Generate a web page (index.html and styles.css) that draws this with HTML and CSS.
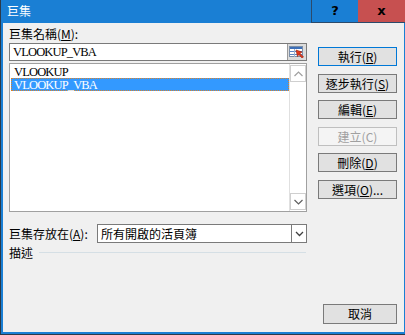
FILE: index.html
```html
<!DOCTYPE html>
<html lang="zh-Hant">
<head>
  <meta charset="UTF-8">
  <title>巨集</title>
  <link rel="stylesheet" href="styles.css">
</head>
<body>
  <div class="window">
    <div class="titlebar">
      <div class="title">巨集</div>
      <div class="caption-btn help">?</div>
      <div class="caption-btn close">x</div>
    </div>

    <div class="client">
      <div class="left">
        <div class="label">巨集名稱(<u>M</u>):</div>
        <div class="name-box">
          <div class="name-text">VLOOKUP_VBA</div>
          <div class="ref-btn">
            <svg width="16" height="12" viewBox="0 0 16 12">
              <rect x="0.5" y="0.5" width="13" height="10" fill="#fff" stroke="#7b8fa8"/>
              <rect x="1" y="1" width="12" height="2" fill="#3d6fb8"/>
              <line x1="1" y1="5.5" x2="13" y2="5.5" stroke="#5b86c6"/>
              <line x1="1" y1="8.5" x2="13" y2="8.5" stroke="#5b86c6"/>
              <line x1="5.5" y1="3" x2="5.5" y2="11" stroke="#9fb3cf"/>
              <path d="M7 4 L13 6 L11 7.5 L14.5 11 L13 12 L9.8 8.6 L8.5 10.5 Z" fill="#e03a1e" stroke="#9a1e0c" stroke-width="0.6"/>
            </svg>
          </div>
        </div>
        <div class="listbox">
          <div class="items">
            <div class="item">VLOOKUP</div>
            <div class="item selected">VLOOKUP_VBA</div>
          </div>
          <div class="scrollbar">
            <div class="arrow">
              <svg width="9" height="6" viewBox="0 0 9 6"><path d="M0.5 5 L4.5 1 L8.5 5" fill="none" stroke="#a0a0a0" stroke-width="1.2"/></svg>
            </div>
            <div class="track"></div>
            <div class="arrow">
              <svg width="9" height="6" viewBox="0 0 9 6"><path d="M0.5 1 L4.5 5 L8.5 1" fill="none" stroke="#606060" stroke-width="1.2"/></svg>
            </div>
          </div>
        </div>

        <div class="store-row">
          <div class="store-label">巨集存放在(<u>A</u>):</div>
          <div class="combo">
            <div class="combo-text">所有開啟的活頁簿</div>
            <div class="combo-arrow">
              <svg width="9" height="6" viewBox="0 0 9 6"><path d="M1 1 L4.5 4.5 L8 1" fill="none" stroke="#404040" stroke-width="1.3"/></svg>
            </div>
          </div>
        </div>

        <div class="desc-row">
          <div class="desc-label">描述</div>
          <div class="desc-line"></div>
        </div>
      </div>

      <div class="right">
        <div class="btn default">執行(<u>R</u>)</div>
        <div class="btn">逐步執行(<u>S</u>)</div>
        <div class="btn">編輯(<u>E</u>)</div>
        <div class="btn disabled">建立(C)</div>
        <div class="btn">刪除(<u>D</u>)</div>
        <div class="btn">選項(<u>O</u>)...</div>
        <div class="btn cancel">取消</div>
      </div>
    </div>
  </div>
</body>
</html>
```

FILE: styles.css
```css
* {
  margin: 0;
  padding: 0;
  box-sizing: border-box;
}

body {
  width: 405px;
  height: 335px;
  overflow: hidden;
  font-family: "Noto Sans CJK TC", "Noto Sans", sans-serif;
  font-size: 12px;
  color: #000;
  background: #fff;
}

.window {
  width: 405px;
  height: 335px;
  background: #1a7fd4;
  border-left: 1px solid #2a3a4a;
  border-bottom: 1px solid #2a3a4a;
  display: flex;
  flex-direction: column;
}

.titlebar {
  height: 23px;
  display: flex;
  align-items: stretch;
}

.title {
  flex: 1;
  color: #fff;
  font-size: 12px;
  line-height: 22px;
  padding-left: 6px;
}

.caption-btn {
  width: 47px;
  text-align: center;
  font-family: "DejaVu Sans", sans-serif;
  font-weight: bold;
  font-size: 13px;
  line-height: 22px;
  color: #000;
  border-bottom: 1px solid #2b4a6b;
}

.help {
  background: #1a7fd4;
  border-left: 1px solid #2b4a6b;
}

.close {
  background: #c75050;
  width: 47px;
}

.client {
  flex: 1;
  margin: 0 1px 2px 2px;
  background: #f0f0f0;
  display: flex;
  gap: 11px;
  padding: 3px 7px 8px 6px;
}

.left {
  width: 298px;
  display: flex;
  flex-direction: column;
}

.label {
  line-height: 15px;
  height: 15px;
  margin-bottom: 2px;
}

u {
  text-decoration: underline;
  text-underline-offset: 1px;
}

.name-box {
  height: 18px;
  background: #fff;
  border: 1px solid #7a7a7a;
  display: flex;
  align-items: stretch;
}

.name-text {
  flex: 1;
  font-family: "Liberation Serif", serif;
  font-size: 12.5px;
  letter-spacing: -0.85px;
  line-height: 16px;
  padding-left: 3px;
}

.ref-btn {
  width: 19px;
  background: #dcdcdc;
  border-left: 1px solid #9a9a9a;
  display: flex;
  align-items: center;
  justify-content: center;
}

.listbox {
  margin-top: 2px;
  height: 149px;
  background: #fff;
  border: 1px solid #a0a0a0;
  display: flex;
}

.items {
  flex: 1;
  padding: 1px 0 0 1px;
}

.item {
  font-family: "Liberation Serif", serif;
  font-size: 12.5px;
  letter-spacing: -0.85px;
  line-height: 12px;
  height: 13px;
  padding-left: 2px;
  border: 1px dotted transparent;
}

.item.selected {
  background: #3399ff;
  color: #fff;
  border-color: #d9822b;
}

.scrollbar {
  width: 17px;
  display: flex;
  flex-direction: column;
  background: #fff;
  border-left: 1px solid #e0e0e0;
  padding: 1px 0;
}

.arrow {
  height: 17px;
  border: 1px solid #cfcfcf;
  display: flex;
  align-items: center;
  justify-content: center;
}

.track {
  flex: 1;
}

.store-row {
  margin-top: 12px;
  display: flex;
  align-items: center;
}

.store-label {
  width: 88px;
  line-height: 15px;
}

.combo {
  flex: 1;
  height: 19px;
  background: #fff;
  border: 1px solid #7a7a7a;
  display: flex;
}

.combo-text {
  flex: 1;
  line-height: 17px;
  padding-left: 3px;
}

.combo-arrow {
  width: 15px;
  border-left: 1px solid #7a7a7a;
  display: flex;
  align-items: center;
  justify-content: center;
}

.desc-row {
  margin-top: 2px;
  display: flex;
  align-items: center;
  gap: 6px;
}

.desc-label {
  line-height: 15px;
}

.desc-line {
  flex: 1;
  height: 1px;
  background: #d5dfe5;
  margin-right: 1px;
}

.right {
  width: 79px;
  display: flex;
  flex-direction: column;
  align-items: flex-end;
  gap: 7.6px;
  padding-top: 21px;
}

.btn {
  width: 79px;
  height: 19px;
  background: #e1e1e1;
  border: 1px solid #7a7a7a;
  text-align: center;
  line-height: 17px;
}

.btn.default {
  border-color: #0078d7;
}

.btn.disabled {
  background: #f4f4f4;
  border-color: #bfbfbf;
  color: #a0a0a0;
}

.btn.cancel {
  margin-top: auto;
  width: 74px;
  height: 20px;
  line-height: 18px;
}
```
